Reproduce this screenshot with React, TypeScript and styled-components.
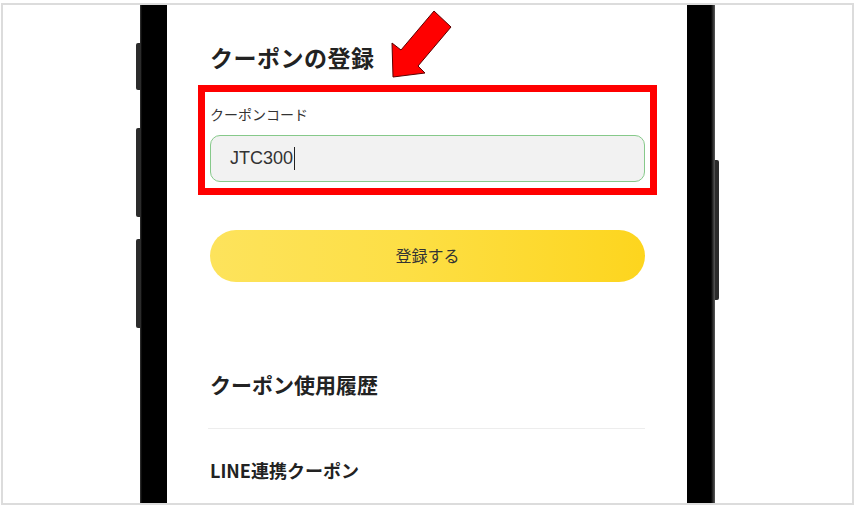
import React from "react";
import styled, { createGlobalStyle } from "styled-components";

const GlobalStyle = createGlobalStyle`
  html, body {
    margin: 0;
    padding: 0;
    background: #fff;
  }
  body {
    font-family: "Noto Sans CJK JP", "Noto Sans", sans-serif;
    color: #222;
  }
  * {
    box-sizing: border-box;
  }
`;

const Frame = styled.div`
  width: 853px;
  height: 502px;
  margin: 3px 0 0 1px;
  border: 2px solid #dcdcdc;
  display: flex;
  padding-left: 132px;
  overflow: hidden;
`;

const Phone = styled.div`
  display: flex;
  height: 100%;
`;

const Rail = styled.div`
  width: 5px;
  display: flex;
  flex-direction: column;
`;

const SideButton = styled.div<{ top: number; length: number; side: "left" | "right" }>`
  margin-top: ${p => p.top}px;
  height: ${p => p.length}px;
  width: 4px;
  margin-left: ${p => (p.side === "left" ? 1 : 0)}px;
  background: #2b2b2b;
  border-radius: ${p => (p.side === "left" ? "2px 0 0 2px" : "0 2px 2px 0")};
`;

const Bezel = styled.div<{ side: "left" | "right" }>`
  width: ${p => (p.side === "left" ? 27 : 28)}px;
  height: 100%;
  background: ${p =>
    p.side === "left"
      ? "linear-gradient(90deg, #3a3a3a 0px, #000 2px, #000 100%)"
      : "linear-gradient(90deg, #000 0px, #000 24px, #5a5a5a 100%)"};
`;

const Screen = styled.div`
  position: relative;
  width: 520px;
  height: 100%;
  background: #fff;
  padding: 36px 42px 0 43px;
`;

const Title = styled.h2<{ size: number }>`
  margin: 0;
  font-size: ${p => p.size}px;
  line-height: ${p => p.size + 9}px;
  font-weight: 700;
  color: #222;
  letter-spacing: ${p => (p.size > 22 ? 0.5 : 0)}px;
`;

const Highlight = styled.div`
  margin: 12px -12px 0;
  border: 7px solid #ff0000;
  padding: 12px 5px 6px;
`;

const Label = styled.div`
  font-size: 14px;
  line-height: 20px;
  color: #333;
`;

const InputBox = styled.div`
  margin-top: 11px;
  height: 47px;
  border: 1px solid #86c98a;
  border-radius: 10px;
  background: #f2f2f2;
  display: flex;
  align-items: center;
  padding-left: 19px;
  font-family: "Liberation Sans", Arial, sans-serif;
  font-size: 18px;
  color: #333;
`;

const Caret = styled.span`
  display: inline-block;
  width: 1px;
  height: 23px;
  margin-left: 1px;
  background: #222;
`;

const SubmitButton = styled.button`
  display: block;
  width: 100%;
  margin-top: 35px;
  height: 52px;
  padding: 0 0 3px;
  border: none;
  border-radius: 26px;
  background: linear-gradient(90deg, #fde35c 0%, #fddf45 45%, #fdd51e 100%);
  font-family: "Noto Sans CJK JP", sans-serif;
  font-size: 16px;
  color: #333;
  cursor: pointer;
`;

const Section = styled.div<{ gap: number }>`
  margin-top: ${p => p.gap}px;
`;

const Divider = styled.hr`
  margin: 29px 0 0 -2px;
  border: none;
  border-top: 1px solid #ededed;
`;

const Arrow = styled.svg`
  position: absolute;
  left: 223px;
  top: 4px;
`;

export default function App() {
  return (
    <>
      <GlobalStyle />
      <Frame>
        <Phone>
          <Rail>
            <SideButton side="left" top={38} length={47} />
            <SideButton side="left" top={38} length={89} />
            <SideButton side="left" top={22} length={89} />
          </Rail>
          <Bezel side="left" />
          <Screen>
            <Arrow width="64" height="72" viewBox="0 0 64 72">
              <polygon
                points="44,2 61,18 28,57 35,64 3,68 2,34 11,41"
                fill="#ff0000"
                stroke="#5a0000"
                strokeWidth="1"
                strokeLinejoin="miter"
              />
            </Arrow>
            <Title size={23}>クーポンの登録</Title>
            <Highlight>
              <Label>クーポンコード</Label>
              <InputBox>
                JTC300
                <Caret />
              </InputBox>
            </Highlight>
            <SubmitButton>登録する</SubmitButton>
            <Section gap={87}>
              <Title size={21}>クーポン使用履歴</Title>
            </Section>
            <Divider />
            <Section gap={28}>
              <Title size={18}>LINE連携クーポン</Title>
            </Section>
          </Screen>
          <Bezel side="right" />
          <Rail>
            <SideButton side="right" top={155} length={140} />
          </Rail>
        </Phone>
      </Frame>
    </>
  );
}
